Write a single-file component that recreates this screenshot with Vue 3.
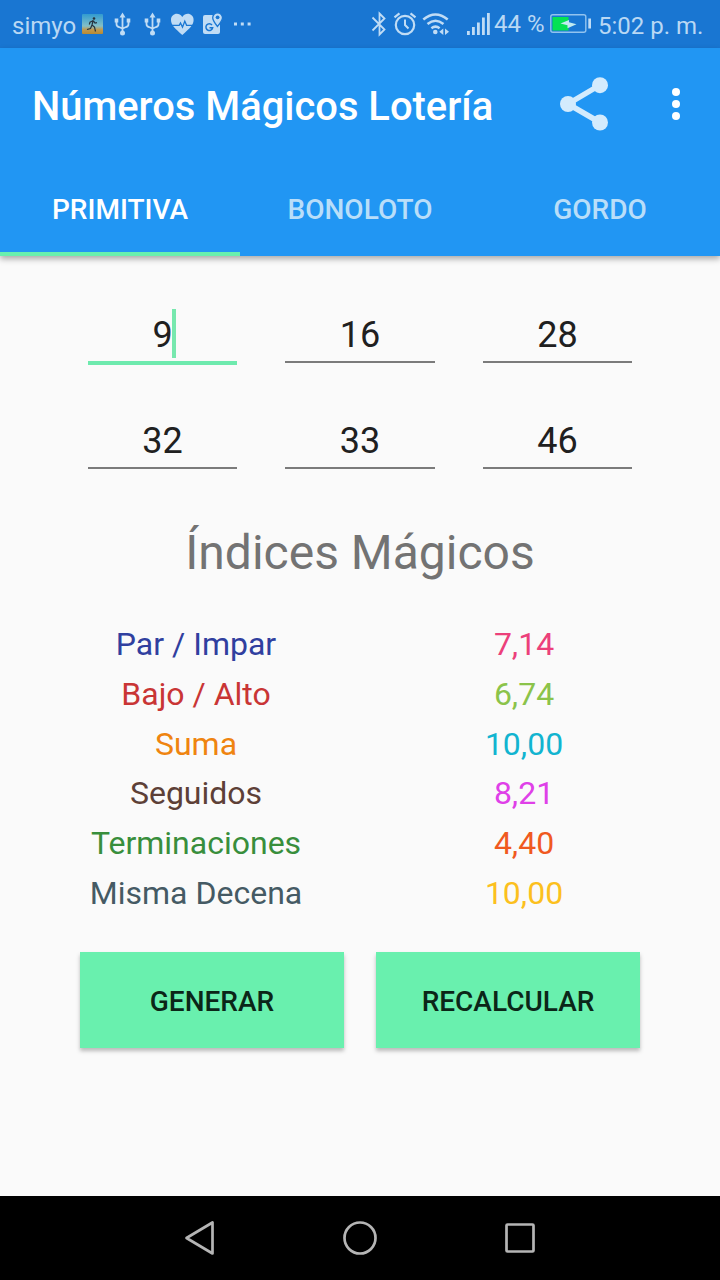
<script setup>
import { ref } from 'vue'

const tabs = ['PRIMITIVA', 'BONOLOTO', 'GORDO']
const activeTab = ref(0)
const numbers = [9, 16, 28, 32, 33, 46]
const indices = [
  { label: 'Par / Impar', value: '7,14', kind: 'parity' },
  { label: 'Bajo / Alto', value: '6,74', kind: 'range' },
  { label: 'Suma', value: '10,00', kind: 'sum' },
  { label: 'Seguidos', value: '8,21', kind: 'run' },
  { label: 'Terminaciones', value: '4,40', kind: 'ending' },
  { label: 'Misma Decena', value: '10,00', kind: 'decade' }
]
</script>

<template>
  <div class="screen">
    <div class="status">
      <span class="carrier">simyo</span>
      <svg width="28" height="48" viewBox="80 0 28 48">
        <defs>
          <linearGradient id="sky" x1="0" y1="0" x2="0" y2="1">
            <stop offset="0" stop-color="#319bd0" />
            <stop offset=".6" stop-color="#83bfc7" />
            <stop offset=".78" stop-color="#c09a50" />
            <stop offset="1" stop-color="#b98a32" />
          </linearGradient>
        </defs>
        <rect x="82" y="14" width="21" height="20" rx="1" fill="url(#sky)" />
        <circle cx="94" cy="18.500" r="1.300" fill="#26323c" />
        <path d="M93.2 20.500 92 25l2.500 2 1 4.500M92 25l-1.500 3.500-3.500 1M93 20.700l-3 1.500-.7 2.300M93.300 20.700l1.700 2.300 2-.3" fill="none" stroke="#26323c" stroke-width="1.200" />
      </svg>
      <svg v-for="n in 2" :key="n" width="30" height="48" viewBox="108 0 30 48">
        <path d="M122.500 15v18M116.500 20v4q0 2.500 2.500 3l3.500 1.500 3.500-1.500q2.500-.5 2.500-3v-4" fill="none" stroke="#c0dcf5" stroke-width="1.800" />
        <path d="m122.500 12.500 3 5h-6zM114.700 18.500h3.600v4h-3.600zM126.700 18.500h3.600v4h-3.600z" fill="#c0dcf5" />
        <circle cx="122.500" cy="33" r="2.500" fill="#c0dcf5" />
      </svg>
      <svg width="30" height="48" viewBox="168 0 30 48">
        <path d="M182.300 35C175 28.500 171 25 171 20c0-6.500 7.800-8.500 11.300-3 3.500-5.500 11.300-3.500 11.300 3 0 5-4 8.500-11.300 15z" fill="#c0dcf5" />
        <path d="M171 25.300h8.200l1.300-2.300 2 4.200 2.300-6 1.800 4.100h7" fill="none" stroke="#1976d2" stroke-width="1.300" />
      </svg>
      <svg width="32" height="48" viewBox="198 0 32 48">
        <path d="M205 15h15v17q0 2-2 2h-13q-2 0-2-2V17q0-2 2-2z" fill="#c0dcf5" />
        <path d="M217.500 26.500c-3-3.800-4.800-6.200-4.800-8.800a4.900 4.900 0 0 1 9.800 0c0 2.600-2 5-5 8.800z" fill="#c0dcf5" stroke="#1976d2" stroke-width="1.300" />
        <circle cx="217.600" cy="17.300" r="1.900" fill="#1976d2" />
        <path d="M212 25a3.400 3.400 0 1 0 .7 2.700H209.500" fill="none" stroke="#1976d2" stroke-width="1.500" />
      </svg>
      <svg width="26" height="48" viewBox="230 0 26 48" fill="#c0dcf5">
        <path d="M234 22.500h3v3h-3zM240.800 22.500h3v3h-3zM247.600 22.500h3v3h-3z" />
      </svg>
      <span class="spacer"></span>
      <svg width="24" height="48" viewBox="366 0 24 48">
        <path d="m372.500 17.500 12 12-5 5V13.500l5 5-12 12" fill="none" stroke="#c0dcf5" stroke-width="1.800" />
      </svg>
      <svg width="30" height="48" viewBox="390 0 30 48" fill="none" stroke="#c0dcf5">
        <circle cx="405" cy="25" r="9.200" stroke-width="2.200" />
        <path d="M405 19.500V25l3.500 3.500" stroke-width="2" />
        <path d="m394.500 17.300 5-4M415.500 17.300l-5-4" stroke-width="2.200" />
      </svg>
      <svg width="40" height="48" viewBox="420 0 40 48" fill="none" stroke="#c0dcf5">
        <path d="M423.300 19.500q12.200-10 24.400 0M427.500 24q8-6.500 16 0M431.400 28.200q4.100-3.200 8.200 0" stroke-width="2.500" />
        <circle cx="435.300" cy="32" r="2.300" fill="#c0dcf5" stroke="none" />
        <path d="m443.300 28.500v6.500l-4-3.200zM445 28.500v6.500l4-3.200z" fill="#c0dcf5" stroke="none" />
      </svg>
      <svg width="33" height="48" viewBox="460 0 33 48" fill="#c0dcf5">
        <path d="M467 31h2.800v4H467zM472 27h2.800v8H472zM477 22.500h2.800V35H477zM482 17.500h2.800V35H482zM487 13h2.800v22H487z" />
      </svg>
      <span class="percent">44 %</span>
      <svg width="50" height="48" viewBox="548 0 50 48">
        <rect x="550.800" y="14.700" width="35" height="17.600" rx="2" fill="none" stroke="#92c3ef" stroke-width="1.400" />
        <path d="M552.500 17h16v13.500h-16z" fill="#04e253" />
        <path d="m560.500 23.500 8.500-3.500v2.200l7.500 2-9 4v-3z" fill="#c0eaf0" />
        <path d="M588.300 18.500h2.700v10h-2.700z" fill="#c0dcf5" />
      </svg>
      <span class="time">5:02 p. m.</span>
    </div>
    <header class="appbar">
      <div class="toolbar">
        <h1>Números Mágicos Lotería</h1>
        <svg width="64" height="64" viewBox="552 72 64 64" fill="#d3ebfd">
          <path d="M600 85 568 104l32 18.500" fill="none" stroke="#d3ebfd" stroke-width="5.500" />
          <circle cx="600" cy="85.200" r="8" /><circle cx="568" cy="104" r="8" /><circle cx="600" cy="122.500" r="8" />
        </svg>
        <svg class="more" width="24" height="64" viewBox="664 72 24 64" fill="#fff">
          <circle cx="676" cy="92" r="4" /><circle cx="676" cy="104" r="4" /><circle cx="676" cy="116" r="4" />
        </svg>
      </div>
      <nav class="tabs">
        <div v-for="(t, i) in tabs" :key="t" class="tab" :class="{ active: i === activeTab }" @click="activeTab = i">{{ t }}</div>
      </nav>
    </header>
    <main class="content">
      <div class="numbers">
        <div v-for="(n, i) in numbers" :key="i" class="field" :class="{ focused: i === 0 }">
          <span class="digits">{{ n }}<i v-if="i === 0" class="caret"></i></span>
        </div>
      </div>
      <h2>Índices Mágicos</h2>
      <div class="indices">
        <div v-for="r in indices" :key="r.kind" class="row" :class="r.kind">
          <span class="label">{{ r.label }}</span>
          <span class="value">{{ r.value }}</span>
        </div>
      </div>
      <div class="actions">
        <button>GENERAR</button>
        <button>RECALCULAR</button>
      </div>
    </main>
    <footer class="navbar">
      <svg width="160" height="84" viewBox="120 1196 160 84"><path d="M212.500 1222.500v31l-26-15.500z" /></svg>
      <svg width="160" height="84" viewBox="280 1196 160 84"><circle cx="360" cy="1238" r="15.500" /></svg>
      <svg width="160" height="84" viewBox="440 1196 160 84"><rect x="506.500" y="1224.500" width="27" height="27" rx="1" /></svg>
    </footer>
  </div>
</template>

<style>
body { margin: 0; }
</style>

<style scoped>
.screen {
  width: 720px;
  height: 1280px;
  display: flex;
  flex-direction: column;
  background: #fafafa;
  font-family: Roboto, "Liberation Sans", sans-serif;
  overflow: hidden;
}
svg { display: block; flex: none; }
.status {
  height: 48px;
  flex: none;
  display: flex;
  align-items: center;
  background: #1976d2;
  color: #b9d8f4;
  font-size: 24px;
  line-height: 48px;
  white-space: nowrap;
}
.carrier { width: 68px; padding: 3px 0 0 12px; }
.spacer { flex: 1; }
.percent { width: 54px; padding-left: 1px; font-size: 24px; }
.time { width: 122px; padding-top: 3px; }
.appbar {
  height: 208px;
  flex: none;
  background: #2196f3;
  box-shadow: 0 3px 6px rgba(0, 0, 0, .32);
}
.toolbar {
  height: 112px;
  display: flex;
  align-items: center;
  padding: 0 32px;
  color: #fff;
}
h1 { flex: 1; margin: 0; padding-top: 4px; font-size: 39.900px; font-weight: 500; white-space: nowrap; }
.more { margin-left: 48px; }
.tabs { height: 96px; display: flex; }
.tab {
  flex: 1;
  box-sizing: border-box;
  border-bottom: 4px solid transparent;
  padding-top: 4px;
  text-align: center;
  font-size: 28px;
  font-weight: 500;
  line-height: 92px;
  height: 96px;
  color: #b9def9;
}
.tab.active { color: #fff; border-color: #69f0ae; }
.content { flex: 1; display: flex; flex-direction: column; padding: 48px 32px 0; }
.numbers {
  display: grid;
  grid-template-columns: 149px 150px 149px;
  grid-auto-rows: 59px;
  justify-content: center;
  gap: 47px 48px;
}
.field {
  box-sizing: border-box;
  height: 59px;
  border-bottom: 2px solid #7b7b7b;
  text-align: center;
  font-size: 36px;
  line-height: 62px;
  color: #202020;
}
.focused { height: 60.500px; border-bottom: 4px solid #6eeaae; }
.digits { position: relative; }
.caret {
  position: absolute;
  right: -3px;
  top: -5px;
  width: 4px;
  height: 49px;
  background: #77e8ae;
}
h2 {
  margin: 48px 0 0;
  height: 70px;
  line-height: 72px;
  text-align: center;
  font-size: 48px;
  font-weight: 400;
  color: #737373;
}
.indices { margin-top: 33px; }
.row { display: grid; grid-template-columns: 1fr 1fr; height: 49.800px; line-height: 49.800px; font-size: 32px; text-align: center; }
.parity .label { color: #303f9f; }
.parity .value { color: #ec407a; }
.range .label { color: #c93535; }
.range .value { color: #8bc34a; }
.sum .label { color: #ef8410; }
.sum .value { color: #12b4d0; }
.run .label { color: #5d4037; }
.run .value { color: #df40e8; }
.ending .label { color: #388e3c; }
.ending .value { color: #f0591f; }
.decade .label { color: #455a64; }
.decade .value { color: #fcc01e; }
.actions { display: flex; justify-content: center; gap: 32px; margin-top: 33px; }
button {
  width: 264px;
  height: 96px;
  border: 0;
  padding: 4px 0 0;
  background: #69f0ae;
  box-shadow: 0 3px 4px rgba(0, 0, 0, .26);
  font: 500 28px Roboto, sans-serif;
  color: #0b2618;
}
.navbar { height: 84px; flex: none; display: flex; justify-content: center; background: #000; }
.navbar svg { fill: none; stroke: #b5b5b5; stroke-width: 2.700; stroke-linejoin: round; }
</style>
